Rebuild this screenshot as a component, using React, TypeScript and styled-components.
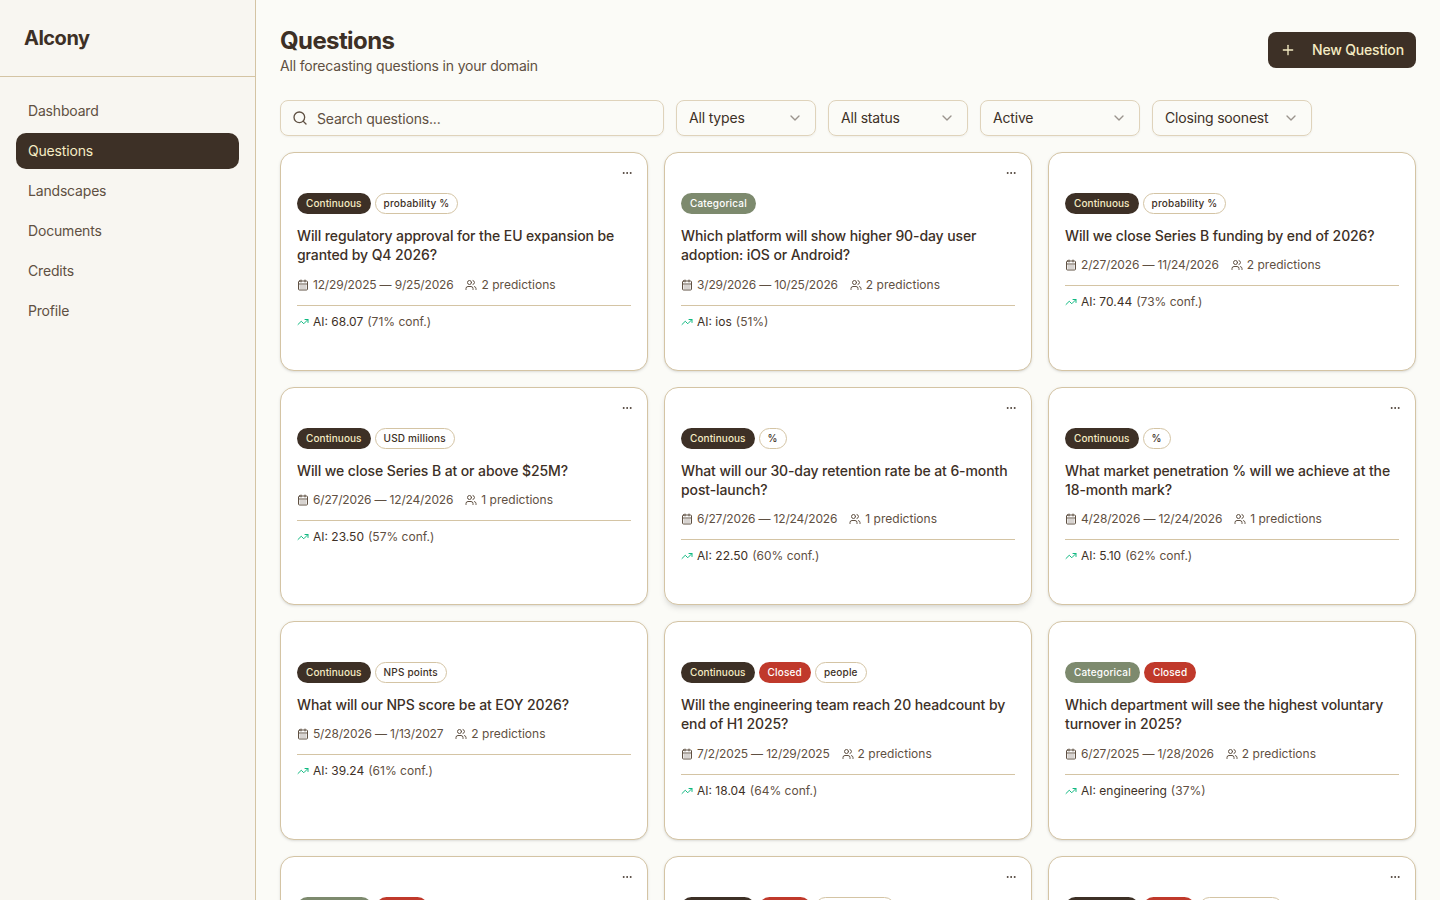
import React from "react";
import styled, { createGlobalStyle, css } from "styled-components";
import { ChevronDown, Ellipsis, Plus, Search, TrendingUp, Users } from "lucide-react";

const color = {
  ink: "#3d3026",
  muted: "#5f5042",
  cream: "#f5ecc4",
  line: "#d4c4a4",
  page: "#fbfbf7",
  side: "#f8f6f1",
  sage: "#7d8a6e",
  red: "#c0392b",
  green: "#10b981",
};

const GlobalStyle = createGlobalStyle`
  *, *::before, *::after { box-sizing: border-box; }
  html, body { margin: 0; height: 100%; overflow: hidden; }
  body {
    background: ${color.page};
    color: ${color.ink};
    font-family: Inter, "Liberation Sans", sans-serif;
    font-size: 14px;
    line-height: 20px;
    letter-spacing: -0.18px;
  }
  h1, h3, p { margin: 0; }
  button, input { font: inherit; color: inherit; letter-spacing: inherit; }
  svg { flex-shrink: 0; display: block; }
`;

const Layout = styled.div`
  display: flex;
  height: 100vh;
  overflow: hidden;
`;

const Sidebar = styled.aside`
  width: 256px;
  flex-shrink: 0;
  background: ${color.side};
  border-right: 1px solid ${color.line};
`;

const Brand = styled.div`
  padding: 24px;
  border-bottom: 1px solid ${color.line};
  font-size: 20px;
  line-height: 28px;
  font-weight: 700;
  letter-spacing: -0.025em;
`;

const Nav = styled.nav`
  display: flex;
  flex-direction: column;
  gap: 4px;
  padding: 16px;
`;

const NavItem = styled.a<{ $active?: boolean }>`
  padding: 8px 12px;
  border-radius: 10px;
  color: ${(p) => (p.$active ? color.cream : color.muted)};
  background: ${(p) => (p.$active ? color.ink : "transparent")};
`;

const Main = styled.main`
  flex: 1;
  min-width: 0;
  padding: 24px;
  overflow: hidden;
`;

const PageHeader = styled.header`
  display: flex;
  align-items: center;
  justify-content: space-between;
  margin-bottom: 24px;
`;

const PageTitle = styled.h1`
  padding-top: 2px;
  font-size: 24px;
  line-height: 30px;
  font-weight: 700;
  letter-spacing: -0.025em;
`;

const Subtitle = styled.p`
  color: ${color.muted};
`;

const PrimaryButton = styled.button`
  display: flex;
  align-items: center;
  gap: 16px;
  width: 148px;
  height: 36px;
  padding: 0 12px;
  border: 0;
  border-radius: 8px;
  background: ${color.ink};
  color: ${color.cream};
  font-weight: 500;
  white-space: nowrap;
`;

const Filters = styled.div`
  display: flex;
  gap: 12px;
  margin-bottom: 16px;
`;

const field = css`
  display: flex;
  align-items: center;
  height: 36px;
  padding: 0 12px;
  border: 1px solid #dfd3bb;
  border-radius: 8px;
  background: transparent;
  box-shadow: 0 1px 2px rgba(0, 0, 0, 0.05);
`;

const SearchField = styled.label`
  ${field}
  width: 384px;
  gap: 9px;
  padding-left: 11px;
  color: ${color.muted};
`;

const SearchInput = styled.input`
  flex: 1;
  min-width: 0;
  padding: 1px 0 0;
  border: 0;
  outline: 0;
  background: transparent;
  &::placeholder { color: ${color.muted}; opacity: 1; }
`;

const Select = styled.button<{ $width: number }>`
  ${field}
  justify-content: space-between;
  width: ${(p) => p.$width}px;
  svg { opacity: 0.5; }
`;

const Grid = styled.section`
  display: grid;
  grid-template-columns: repeat(3, 1fr);
  gap: 16px;
`;

const Card = styled.article<{ $raised?: boolean }>`
  position: relative;
  padding: 40px 16px;
  border: 1px solid ${color.line};
  border-radius: 14px;
  background: #fff;
  box-shadow: ${(p) =>
    p.$raised
      ? "0 4px 6px -1px rgba(0,0,0,.1), 0 2px 4px -2px rgba(0,0,0,.1)"
      : "0 1px 3px rgba(0,0,0,.1), 0 1px 2px -1px rgba(0,0,0,.1)"};
`;

const MenuButton = styled.button`
  position: absolute;
  top: 8px;
  right: 8px;
  display: grid;
  place-items: center;
  width: 24px;
  height: 24px;
  padding: 0;
  border: 0;
  background: transparent;
  color: ${color.ink};
`;

const Badges = styled.div`
  display: flex;
  gap: 4px;
`;

type Tone = "dark" | "sage" | "red" | "outline";

const tones = {
  dark: css`background: ${color.ink}; color: ${color.cream}; letter-spacing: 0.08px;`,
  sage: css`background: ${color.sage}; color: #fff;`,
  red: css`background: ${color.red}; color: #fff;`,
  outline: css`border-color: ${color.line};`,
};

const Badge = styled.span<{ $tone: Tone }>`
  padding: 2px 8px;
  border: 1px solid transparent;
  border-radius: 999px;
  font-size: 10px;
  line-height: 15px;
  font-weight: 500;
  letter-spacing: 0.17px;
  white-space: nowrap;
  ${(p) => tones[p.$tone]}
`;

const CardTitle = styled.h3`
  margin-top: 12px;
  font-size: 14px;
  line-height: 19.25px;
  font-weight: 500;
  letter-spacing: -0.105px;
`;

const Meta = styled.div`
  display: flex;
  gap: 12px;
  margin-top: 12px;
  font-size: 12px;
  line-height: 16px;
  letter-spacing: 0.02px;
  color: ${color.muted};
`;

const MetaItem = styled.span`
  display: flex;
  align-items: center;
  gap: 4px;
`;

const Dates = styled.span`
  letter-spacing: -0.17px;
`;

const Forecast = styled.div`
  display: flex;
  align-items: center;
  gap: 4px;
  margin-top: 12px;
  padding-top: 8px;
  border-top: 1px solid ${color.line};
  font-size: 12px;
  line-height: 16px;
  letter-spacing: 0;
  svg { color: ${color.green}; }
`;

const Confidence = styled.span`
  color: ${color.muted};
`;

interface Question {
  kind: "Continuous" | "Categorical";
  closed?: boolean;
  unit?: string;
  title: string;
  dates: string;
  count: number;
  ai: string;
  conf: string;
  menu?: boolean;
  raised?: boolean;
}

const questions: Question[] = [
  { kind: "Continuous", unit: "probability %", title: "Will regulatory approval for the EU expansion be granted by Q4 2026?", dates: "12/29/2025 — 9/25/2026", count: 2, ai: "68.07", conf: "(71% conf.)", menu: true },
  { kind: "Categorical", title: "Which platform will show higher 90-day user adoption: iOS or Android?", dates: "3/29/2026 — 10/25/2026", count: 2, ai: "ios", conf: "(51%)", menu: true },
  { kind: "Continuous", unit: "probability %", title: "Will we close Series B funding by end of 2026?", dates: "2/27/2026 — 11/24/2026", count: 2, ai: "70.44", conf: "(73% conf.)" },
  { kind: "Continuous", unit: "USD millions", title: "Will we close Series B at or above $25M?", dates: "6/27/2026 — 12/24/2026", count: 1, ai: "23.50", conf: "(57% conf.)", menu: true },
  { kind: "Continuous", unit: "%", title: "What will our 30-day retention rate be at 6-month post-launch?", dates: "6/27/2026 — 12/24/2026", count: 1, ai: "22.50", conf: "(60% conf.)", menu: true, raised: true },
  { kind: "Continuous", unit: "%", title: "What market penetration % will we achieve at the 18-month mark?", dates: "4/28/2026 — 12/24/2026", count: 1, ai: "5.10", conf: "(62% conf.)", menu: true },
  { kind: "Continuous", unit: "NPS points", title: "What will our NPS score be at EOY 2026?", dates: "5/28/2026 — 1/13/2027", count: 2, ai: "39.24", conf: "(61% conf.)" },
  { kind: "Continuous", closed: true, unit: "people", title: "Will the engineering team reach 20 headcount by end of H1 2025?", dates: "7/2/2025 — 12/29/2025", count: 2, ai: "18.04", conf: "(64% conf.)" },
  { kind: "Categorical", closed: true, title: "Which department will see the highest voluntary turnover in 2025?", dates: "6/27/2025 — 1/28/2026", count: 2, ai: "engineering", conf: "(37%)" },
  { kind: "Categorical", closed: true, title: "", dates: "", count: 0, ai: "", conf: "", menu: true },
  { kind: "Continuous", closed: true, unit: "USD millions", title: "", dates: "", count: 0, ai: "", conf: "", menu: true },
  { kind: "Continuous", closed: true, unit: "probability %", title: "", dates: "", count: 0, ai: "", conf: "", menu: true },
];

const navItems = ["Dashboard", "Questions", "Landscapes", "Documents", "Credits", "Profile"];

const filters = [
  { label: "All types", width: 140 },
  { label: "All status", width: 140 },
  { label: "Active", width: 160 },
  { label: "Closing soonest", width: 160 },
];

/* Calendar with a lightly tinted day area. */
function DateIcon() {
  return (
    <svg width="12" height="12" viewBox="0 0 24 24" fill="none" stroke="currentColor" strokeWidth="2" strokeLinecap="round" strokeLinejoin="round">
      <path d="M8 2v4M16 2v4M3 10h18" />
      <rect x="3" y="4" width="18" height="18" rx="2" />
      <path d="M5 12h14v8H5z" fill="currentColor" fillOpacity="0.25" stroke="none" />
    </svg>
  );
}

function QuestionCard({ q }: { q: Question }) {
  return (
    <Card $raised={q.raised}>
      {q.menu && (
        <MenuButton aria-label="More">
          <Ellipsis size={12} strokeWidth={1.8} />
        </MenuButton>
      )}
      <Badges>
        <Badge $tone={q.kind === "Continuous" ? "dark" : "sage"}>{q.kind}</Badge>
        {q.closed && <Badge $tone="red">Closed</Badge>}
        {q.unit && <Badge $tone="outline">{q.unit}</Badge>}
      </Badges>
      {q.title && (
        <>
          <CardTitle>{q.title}</CardTitle>
          <Meta>
            <MetaItem><DateIcon /><Dates>{q.dates}</Dates></MetaItem>
            <MetaItem><Users size={12} />{q.count} predictions</MetaItem>
          </Meta>
          <Forecast>
            <TrendingUp size={12} />
            <span>AI: {q.ai}</span>
            <Confidence>{q.conf}</Confidence>
          </Forecast>
        </>
      )}
    </Card>
  );
}

export default function App() {
  return (
    <>
      <GlobalStyle />
      <Layout>
        <Sidebar>
          <Brand>Alcony</Brand>
          <Nav>
            {navItems.map((item) => (
              <NavItem key={item} $active={item === "Questions"}>{item}</NavItem>
            ))}
          </Nav>
        </Sidebar>
        <Main>
          <PageHeader>
            <div>
              <PageTitle>Questions</PageTitle>
              <Subtitle>All forecasting questions in your domain</Subtitle>
            </div>
            <PrimaryButton><Plus size={16} />New Question</PrimaryButton>
          </PageHeader>
          <Filters>
            <SearchField>
              <Search size={16} />
              <SearchInput placeholder="Search questions..." />
            </SearchField>
            {filters.map((f) => (
              <Select key={f.label} $width={f.width}>{f.label}<ChevronDown size={16} /></Select>
            ))}
          </Filters>
          <Grid>
            {questions.map((q, i) => <QuestionCard key={i} q={q} />)}
          </Grid>
        </Main>
      </Layout>
    </>
  );
}
